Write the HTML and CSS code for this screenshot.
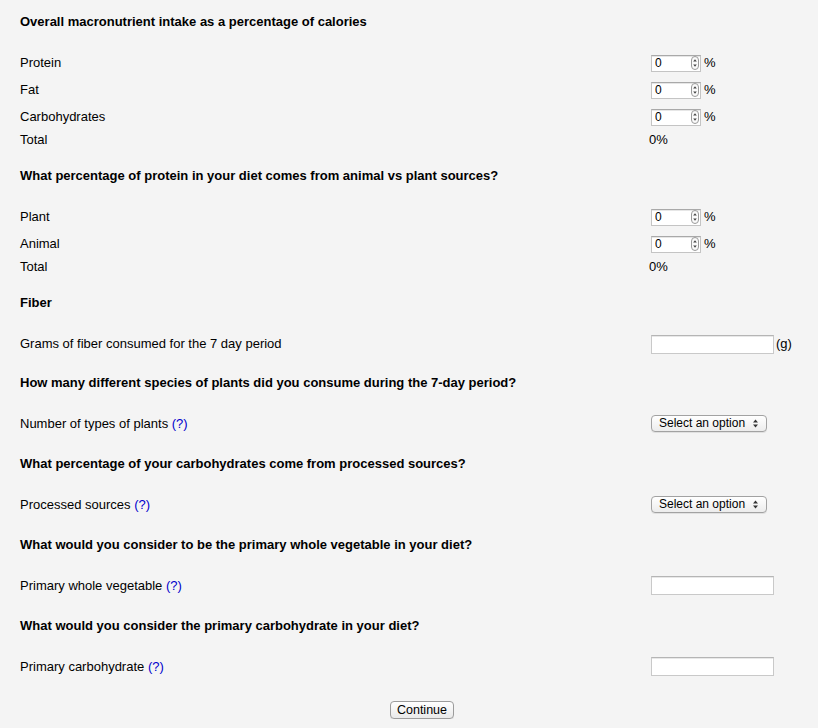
FILE: index.html
```html
<!DOCTYPE html>
<html>
<head>
<meta charset="utf-8">
<link rel="stylesheet" href="styles.css">
</head>
<body>
<form class="page">
  <section class="section">
    <h3 class="heading">Overall macronutrient intake as a percentage of calories</h3>
    <div class="row num"><span class="label">Protein</span><span class="ctrl"><span class="numbox"><input class="numval" type="text" value="0"><svg class="spin" width="8" height="14" viewBox="0 0 8 14"><rect x="0.5" y="0.5" width="7" height="13" rx="3.5" fill="#fafafa" stroke="#9a9a9a"/><path d="M4 3.2 L5.8 5.6 L2.2 5.6Z" fill="#444"/><path d="M4 10.8 L5.8 8.4 L2.2 8.4Z" fill="#444"/></svg></span><span class="unit">%</span></span></div>
    <div class="row num"><span class="label">Fat</span><span class="ctrl"><span class="numbox"><input class="numval" type="text" value="0"><svg class="spin" width="8" height="14" viewBox="0 0 8 14"><rect x="0.5" y="0.5" width="7" height="13" rx="3.5" fill="#fafafa" stroke="#9a9a9a"/><path d="M4 3.2 L5.8 5.6 L2.2 5.6Z" fill="#444"/><path d="M4 10.8 L5.8 8.4 L2.2 8.4Z" fill="#444"/></svg></span><span class="unit">%</span></span></div>
    <div class="row num"><span class="label">Carbohydrates</span><span class="ctrl"><span class="numbox"><input class="numval" type="text" value="0"><svg class="spin" width="8" height="14" viewBox="0 0 8 14"><rect x="0.5" y="0.5" width="7" height="13" rx="3.5" fill="#fafafa" stroke="#9a9a9a"/><path d="M4 3.2 L5.8 5.6 L2.2 5.6Z" fill="#444"/><path d="M4 10.8 L5.8 8.4 L2.2 8.4Z" fill="#444"/></svg></span><span class="unit">%</span></span></div>
    <div class="row total"><span class="label">Total</span><span class="ctrl">0%</span></div>
  </section>

  <section class="section">
    <h3 class="heading">What percentage of protein in your diet comes from animal vs plant sources?</h3>
    <div class="row num"><span class="label">Plant</span><span class="ctrl"><span class="numbox"><input class="numval" type="text" value="0"><svg class="spin" width="8" height="14" viewBox="0 0 8 14"><rect x="0.5" y="0.5" width="7" height="13" rx="3.5" fill="#fafafa" stroke="#9a9a9a"/><path d="M4 3.2 L5.8 5.6 L2.2 5.6Z" fill="#444"/><path d="M4 10.8 L5.8 8.4 L2.2 8.4Z" fill="#444"/></svg></span><span class="unit">%</span></span></div>
    <div class="row num"><span class="label">Animal</span><span class="ctrl"><span class="numbox"><input class="numval" type="text" value="0"><svg class="spin" width="8" height="14" viewBox="0 0 8 14"><rect x="0.5" y="0.5" width="7" height="13" rx="3.5" fill="#fafafa" stroke="#9a9a9a"/><path d="M4 3.2 L5.8 5.6 L2.2 5.6Z" fill="#444"/><path d="M4 10.8 L5.8 8.4 L2.2 8.4Z" fill="#444"/></svg></span><span class="unit">%</span></span></div>
    <div class="row total"><span class="label">Total</span><span class="ctrl">0%</span></div>
  </section>

  <section class="section tight">
    <h3 class="heading">Fiber</h3>
    <div class="row field"><span class="label">Grams of fiber consumed for the 7 day period</span><span class="ctrl"><input class="textbox" type="text"><span class="unit-g">(g)</span></span></div>
  </section>

  <section class="section">
    <h3 class="heading">How many different species of plants did you consume during the 7-day period?</h3>
    <div class="row field"><span class="label">Number of types of plants <a class="help" href="#">(?)</a></span><span class="ctrl"><span class="select"><span class="select-text">Select an option</span><svg width="7" height="9" viewBox="0 0 7 9"><path d="M3.5 0.5 L6 3.5 L1 3.5Z" fill="#333"/><path d="M3.5 8.5 L6 5.5 L1 5.5Z" fill="#333"/></svg></span></span></div>
  </section>

  <section class="section">
    <h3 class="heading">What percentage of your carbohydrates come from processed sources?</h3>
    <div class="row field"><span class="label">Processed sources <a class="help" href="#">(?)</a></span><span class="ctrl"><span class="select"><span class="select-text">Select an option</span><svg width="7" height="9" viewBox="0 0 7 9"><path d="M3.5 0.5 L6 3.5 L1 3.5Z" fill="#333"/><path d="M3.5 8.5 L6 5.5 L1 5.5Z" fill="#333"/></svg></span></span></div>
  </section>

  <section class="section">
    <h3 class="heading">What would you consider to be the primary whole vegetable in your diet?</h3>
    <div class="row field"><span class="label">Primary whole vegetable <a class="help" href="#">(?)</a></span><span class="ctrl"><input class="textbox" type="text"></span></div>
  </section>

  <section class="section last">
    <h3 class="heading">What would you consider the primary carbohydrate in your diet?</h3>
    <div class="row field"><span class="label">Primary carbohydrate <a class="help" href="#">(?)</a></span><span class="ctrl"><input class="textbox" type="text"></span></div>
  </section>

  <div class="actions"><button class="btn" type="button">Continue</button></div>
</form>
</body>
</html>
```

FILE: styles.css
```css
html, body {
  margin: 0;
  padding: 0;
  background: #f4f4f4;
}

body {
  font-family: "Liberation Sans", Arial, sans-serif;
  font-size: 13px;
  color: #000;
}

.page {
  padding: 14px 20px 0 20px;
}

.section {
  margin-bottom: 18.5px;
}

.section.tight {
  margin-bottom: 17px;
}

.section.last {
  margin-bottom: 20.5px;
}

.heading {
  margin: 0 0 19.5px 0;
  font-size: 13px;
  font-weight: bold;
  line-height: 16px;
  height: 16px;
}

.row {
  display: grid;
  grid-template-columns: 629px auto;
  align-items: center;
  line-height: 16px;
}

.row.num,
.row.field {
  height: 27px;
}

.row.total {
  height: 19px;
}

.ctrl {
  display: flex;
  align-items: center;
}

.numbox {
  display: flex;
  align-items: center;
  margin-left: 2px;
  width: 50px;
  height: 17px;
  box-sizing: border-box;
  background: #fff;
  border: 1px solid #c4c4c4;
  border-top-color: #a9a9a9;
  box-shadow: inset 0 1px 0 #e6e6e6;
}

.numval {
  border: 0;
  outline: none;
  background: transparent;
  width: 34px;
  height: 15px;
  padding: 0 0 0 3px;
  margin: 0;
  font-family: "Liberation Sans", Arial, sans-serif;
  font-size: 12px;
  color: #000;
}

.spin {
  display: block;
  margin-left: 2px;
}

.unit {
  margin-left: 3px;
}

.unit-g {
  margin-left: 2px;
}

.textbox {
  margin: 0 0 0 2px;
  width: 123px;
  height: 19px;
  box-sizing: border-box;
  padding: 0 3px;
  background: #fff;
  border: 1px solid #c9c9c9;
  border-top-color: #b5b5b5;
  box-shadow: inset 0 1px 0 #e8e8e8;
  font-family: "Liberation Sans", Arial, sans-serif;
  font-size: 12px;
  outline: none;
}

.select {
  display: flex;
  align-items: center;
  justify-content: space-between;
  margin-left: 2px;
  width: 116px;
  height: 17px;
  box-sizing: border-box;
  padding: 0 7px 0 7px;
  border: 1px solid #a2a2a2;
  border-radius: 4px;
  background: linear-gradient(#ffffff, #ececec);
  box-shadow: 0 1px 0 rgba(0, 0, 0, 0.08);
  font-size: 12px;
  line-height: 15px;
  color: #000;
}

.help {
  color: #0000cc;
  text-decoration: none;
}

.actions {
  display: flex;
  justify-content: center;
  padding-left: 26px;
}

.btn {
  width: 64px;
  height: 18px;
  padding: 0;
  margin: 0;
  border: 1px solid #9c9c9c;
  border-radius: 4px;
  background: linear-gradient(#ffffff, #e9e9e9);
  box-shadow: 0 1px 0 rgba(0, 0, 0, 0.08);
  font-family: "Liberation Sans", Arial, sans-serif;
  font-size: 12.5px;
  line-height: 16px;
  color: #000;
}
```
